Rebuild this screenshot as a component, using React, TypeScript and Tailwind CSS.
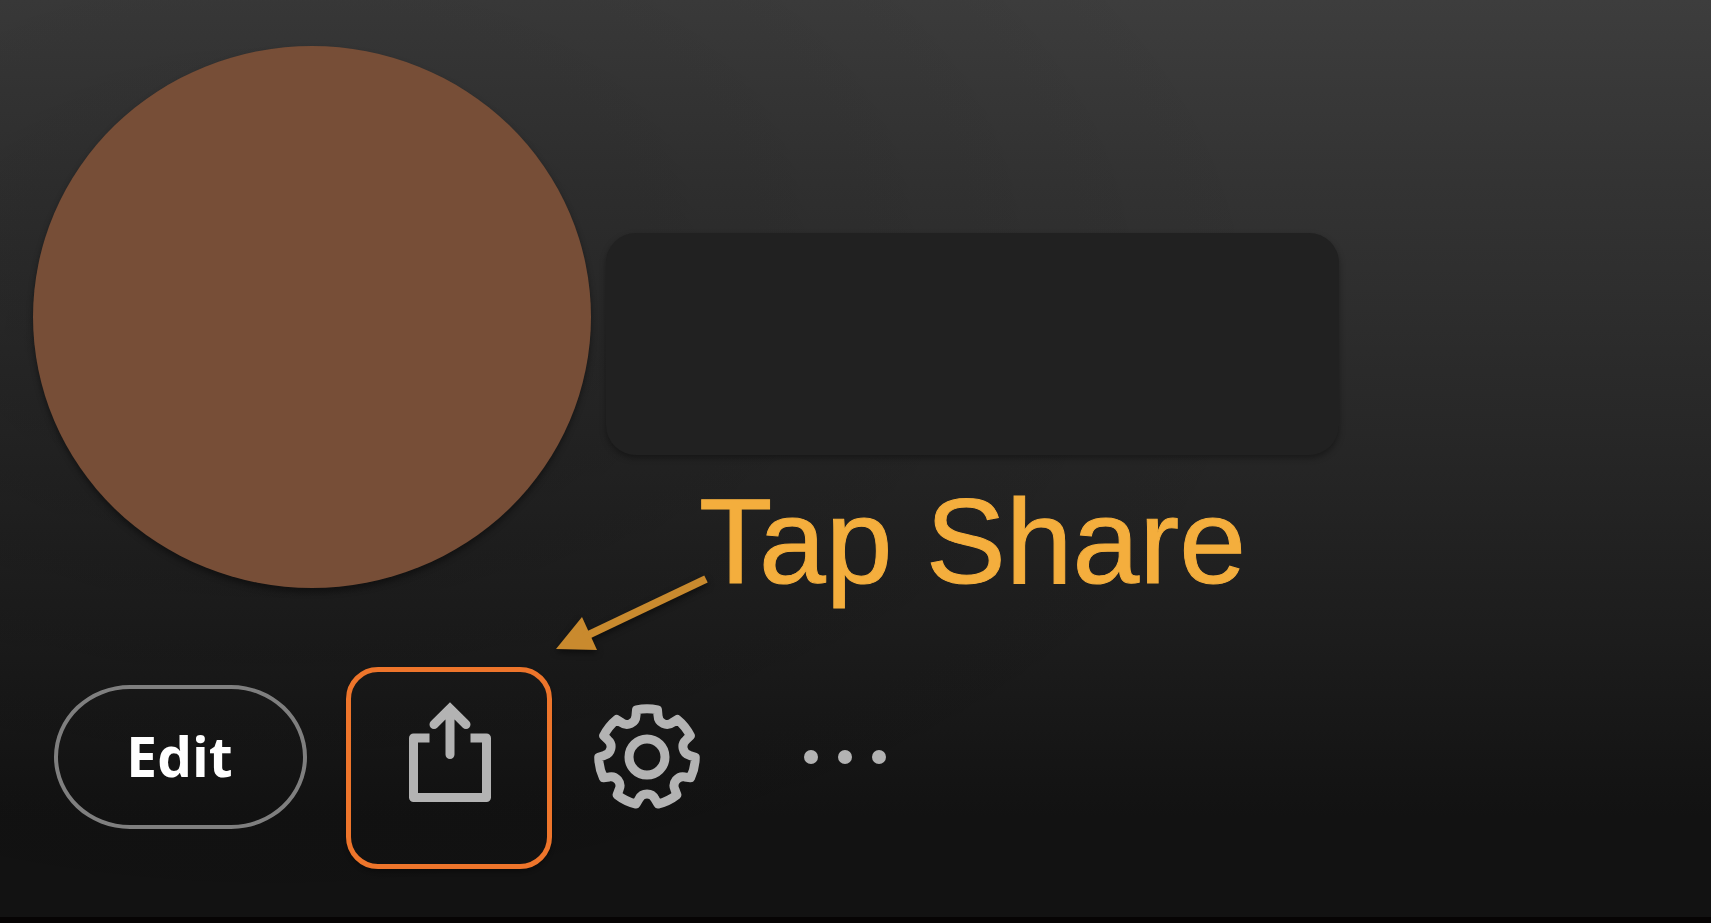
import React from 'react';

const TEETH = 7;

// Walks round the gear: one valley plus the tooth edge after it, per step.
const buildGearPath = () => {
  const valley = [[-11, -47], [-8, -42], [8, -42], [11, -47]];
  let d = '';
  for (let i = 0; i < TEETH; i++) {
    const a = ((i + 0.5) * 2 * Math.PI) / TEETH;
    const [p1, p2, p3, p4] = valley.map(([x, y]) => {
      const px = x * Math.cos(a) - y * Math.sin(a);
      const py = x * Math.sin(a) + y * Math.cos(a);
      return `${px.toFixed(2)} ${py.toFixed(2)}`;
    });
    d += i === 0 ? `M${p1}` : `A48.300 48.300 0 0 1 ${p1}`;
    d += `L${p2}A9 9 0 0 0 ${p3}L${p4}`;
  }
  return `${d}A48.300 48.300 0 0 1 ${d.slice(1, d.indexOf('L'))}Z`;
};

const gearPath = buildGearPath();

const ShareIcon: React.FC = () => (
  <svg width="82" height="100" viewBox="0 0 82 100" fill="none" stroke="currentColor" strokeWidth="9">
    <path d="M20.500 36H4.500V95.500H77.500V36H61.500" strokeLinejoin="round" />
    <path d="M41 9V52.500M25 22.500L41 6.500L57 22.500" strokeLinecap="round" />
  </svg>
);

const GearIcon: React.FC = () => (
  <svg width="112" height="112" viewBox="-56 -56 112 112" fill="none" stroke="currentColor" strokeWidth="9">
    <path d={gearPath} strokeLinejoin="round" />
    <circle r="18" />
  </svg>
);

const DotsIcon: React.FC = () => (
  <svg width="82" height="16" viewBox="0 0 82 16" fill="currentColor">
    <circle cx="7" cy="8" r="7" />
    <circle cx="41" cy="8" r="7" />
    <circle cx="75" cy="8" r="7" />
  </svg>
);

const App: React.FC = () => {
  return (
    <main className="min-h-screen flex flex-col pt-[46px] border-b-[6px] border-[#060404] bg-[radial-gradient(ellipse_60%_70%_at_16%_36%,rgba(0,0,0,0.2),transparent),linear-gradient(180deg,#3d3d3d_0%,#333333_20%,#282828_45%,#1d1d1d_68%,#121212_89%)] text-[#b3b3b3]">
      <header className="flex gap-[15px] pl-[33px] pr-8">
        <div className="shrink-0 w-[558px] h-[542px] rounded-[50%] bg-[#774e37] shadow-[0_4px_6px_rgba(0,0,0,0.4)]" />
        <div className="flex-1 pt-[187px]">
          <div className="w-full max-w-[733px] h-[222px] rounded-[30px] bg-[#212121] shadow-[0_3px_6px_rgba(0,0,0,0.35)]" />
          <h1 className="relative mt-[26px] ml-[93px] whitespace-nowrap font-['Liberation_Sans',sans-serif] text-[120px] leading-[120px] text-[#f4ae3d] [-webkit-text-stroke:1px_#f4ae3d]">
            Tap Share
            <svg
              className="absolute top-[90px] -left-[147px] drop-shadow-[0_3px_3px_rgba(0,0,0,0.5)]"
              width="160"
              height="84"
              viewBox="0 0 160 84"
              fill="#c98a2e"
            >
              <path d="M4 78L30 46L45 79Z" />
              <path d="M32 66L154 8" stroke="#c98a2e" strokeWidth="8" />
            </svg>
          </h1>
        </div>
      </header>

      <div className="flex items-center gap-[39px] mt-[84px] pl-[54px]">
        <button className="w-[253px] h-36 pb-0.5 pr-0.5 rounded-[76px/72px] border-4 border-[#7f7f7f] font-['Open_Sans',sans-serif] text-[55px] font-bold text-white">
          Edit
        </button>
        <button aria-label="Share" className="relative w-[206px] h-36 pb-2.5 pl-0.5 flex items-center justify-center">
          <ShareIcon />
          <span className="absolute inset-x-0 -top-[18px] -bottom-10 rounded-[32px] border-[5px] border-[#ee752b] shadow-[0_3px_4px_rgba(0,0,0,0.3)]" />
        </button>
        <button aria-label="Settings" className="w-28 h-36 flex items-center justify-center">
          <GearIcon />
        </button>
        <button aria-label="More options" className="w-[206px] h-36 flex items-center justify-center">
          <DotsIcon />
        </button>
      </div>
    </main>
  );
};

export default App;
